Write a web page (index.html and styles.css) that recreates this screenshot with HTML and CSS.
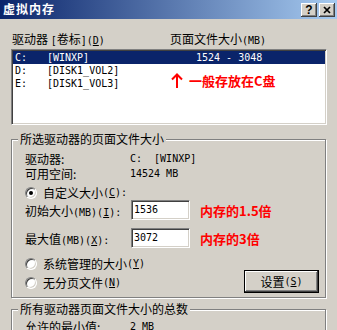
FILE: index.html
```html
<!DOCTYPE html>
<html lang="zh-CN">
<head>
  <meta charset="UTF-8">
  <title>虚拟内存</title>
  <link rel="stylesheet" href="styles.css">
</head>
<body>
  <div class="window">
    <!-- Title bar -->
    <div class="titlebar">
      <span class="title">虚拟内存</span>
      <div class="caption-btns">
        <span class="cbtn help">?</span>
        <span class="cbtn">
          <svg width="8" height="8" viewBox="0 0 8 8"><path d="M1 1L7 7M7 1L1 7" stroke="#000" stroke-width="1.7"/></svg>
        </span>
      </div>
    </div>

    <div class="content">
      <!-- Drive list -->
      <div class="list-head">
        <span>驱动器 <span class="en">[</span>卷标<span class="en">](<u>D</u>)</span></span>
        <span>页面文件大小<span class="en">(MB)</span></span>
      </div>
      <div class="listbox">
        <div class="row sel"><span>C:</span><span>[WINXP]</span><span>1524 - 3048</span></div>
        <div class="row"><span>D:</span><span>[DISK1_VOL2]</span><span></span></div>
        <div class="row"><span>E:</span><span>[DISK1_VOL3]</span><span></span></div>
        <div class="note">
          <svg width="12" height="15" viewBox="0 0 12 15"><path d="M6 1.5V15M1 6.5L6 1.5L11 6.5" fill="none" stroke="#f00" stroke-width="2"/></svg>
          <span>一般存放在C盘</span>
        </div>
      </div>

      <!-- Selected drive -->
      <fieldset class="group">
        <legend>所选驱动器的页面文件大小</legend>
        <div class="group-body">
          <div class="info"><span>驱动器:</span><span class="en">C:  [WINXP]</span></div>
          <div class="info"><span>可用空间:</span><span class="en">14524 MB</span></div>
          <div class="option first"><span class="radio checked"></span>自定义大小<span class="en">(<u>C</u>):</span></div>
          <div class="field">
            <span>初始大小<span class="en">(MB)(<u>I</u>):</span></span>
            <span class="input en">1536</span>
            <span class="red">内存的1.5倍</span>
          </div>
          <div class="field second">
            <span>最大值<span class="en">(MB)(<u>X</u>):</span></span>
            <span class="input en">3072</span>
            <span class="red">内存的3倍</span>
          </div>
          <div class="bottom">
            <div class="options">
              <div class="option"><span class="radio"></span>系统管理的大小<span class="en">(<u>Y</u>)</span></div>
              <div class="option"><span class="radio"></span>无分页文件<span class="en">(<u>N</u>)</span></div>
            </div>
            <span class="button">设置<span class="en">(<u>S</u>)</span></span>
          </div>
        </div>
      </fieldset>

      <!-- Totals -->
      <fieldset class="group total">
        <legend>所有驱动器页面文件大小的总数</legend>
        <div class="group-body">
          <div class="info"><span>允许的最小值:</span><span class="en">2 MB</span></div>
        </div>
      </fieldset>
    </div>
  </div>
</body>
</html>
```

FILE: styles.css
```css
body {
  margin: 0;
  background: #d4d0c8;
  font-family: "Noto Sans CJK SC", sans-serif;
  font-size: 12px;
  color: #000;
}
.window {
  width: 337px;
  height: 330px;
  overflow: hidden;
  background: #d4d0c8;
}
.en {
  font-family: "DejaVu Sans Mono", monospace;
  font-size: 10px;
  white-space: pre;
}

/* title bar */
.titlebar {
  height: 19px;
  display: flex;
  justify-content: space-between;
  align-items: flex-start;
  padding: 0 2px 0 3px;
  background: linear-gradient(to right, #0a246a, #a6caf0);
}
.title {
  color: #fff;
  font-weight: bold;
  letter-spacing: 1px;
  line-height: 14px;
  margin-top: 2px;
}
.caption-btns {
  display: flex;
  gap: 2px;
  margin-top: 3px;
}
.cbtn {
  width: 16px;
  height: 14px;
  box-sizing: border-box;
  display: flex;
  align-items: center;
  justify-content: center;
  background: #d4d0c8;
  box-shadow: inset -1px -1px #404040, inset 1px 1px #fff, inset -2px -2px #808080;
}
.cbtn.help {
  font-family: "Liberation Sans", sans-serif;
  font-weight: bold;
  font-size: 12px;
  line-height: 14px;
}

.content {
  padding: 0 10px 0 11px;
}

/* drive list */
.list-head {
  display: grid;
  grid-template-columns: 158px 1fr;
  padding: 13px 0 0 1px;
  line-height: 14px;
  margin-bottom: 1px;
}
.listbox {
  position: relative;
  height: 76px;
  box-sizing: border-box;
  background: #fff;
  border: 1px solid;
  border-color: #808080 #fff #fff #808080;
  box-shadow: inset 1px 1px #404040, inset -1px -1px #d4d0c8;
  padding: 1px;
}
.row {
  display: grid;
  grid-template-columns: 32px 149px 1fr;
  height: 13px;
  line-height: 13px;
  padding-left: 2px;
  font-family: "DejaVu Sans Mono", monospace;
  font-size: 10px;
  white-space: pre;
}
.row.sel {
  background: #0a246a;
  color: #fff;
}
.note {
  position: absolute;
  left: 159px;
  top: 23px;
  display: flex;
  align-items: center;
  gap: 6px;
  color: #f00;
  font-weight: bold;
  font-size: 13px;
  line-height: 15px;
}

/* group boxes */
.group {
  margin: 7px 1px 0 0;
  padding: 0;
  border: 1px solid #808080;
  box-shadow: inset 1px 1px #fff, 1px 1px #fff;
  min-width: 0;
}
.group legend {
  margin-left: 6px;
  padding: 0 2px;
  line-height: 14px;
  background: #d4d0c8;
}
.group-body {
  padding: 5px 6px 4px 13px;
}
.info {
  display: grid;
  grid-template-columns: 105px 1fr;
  height: 15px;
  line-height: 15px;
}
.option {
  display: flex;
  align-items: center;
  height: 15px;
  line-height: 15px;
}
.option.first {
  margin-top: 4px;
}
.radio {
  position: relative;
  width: 12px;
  height: 12px;
  box-sizing: border-box;
  margin-right: 6px;
  border-radius: 50%;
  background: #fff;
  border: 1px solid;
  border-color: #808080 #fff #fff #808080;
  box-shadow: inset 1px 1px #404040, inset -1px -1px #d4d0c8;
}
.radio.checked::after {
  content: "";
  position: absolute;
  left: 3px;
  top: 3px;
  width: 4px;
  height: 4px;
  border-radius: 50%;
  background: #000;
}
.field {
  display: grid;
  grid-template-columns: 106px 59px 1fr;
  align-items: center;
  height: 20px;
}
.field.second {
  margin-top: 8px;
}
.input {
  height: 20px;
  box-sizing: border-box;
  background: #fff;
  border: 1px solid;
  border-color: #808080 #fff #fff #808080;
  box-shadow: inset 1px 1px #404040, inset -1px -1px #d4d0c8;
  padding: 2px 0 0 2px;
  line-height: 14px;
}
.red {
  color: #f00;
  font-weight: bold;
  font-size: 13px;
  margin-left: 10px;
}
.bottom {
  display: flex;
  justify-content: space-between;
  height: 37px;
  margin-top: 8px;
}
.options {
  display: flex;
  flex-direction: column;
  gap: 4px;
}
.button {
  align-self: flex-end;
  width: 75px;
  height: 23px;
  box-sizing: border-box;
  display: flex;
  align-items: center;
  justify-content: center;
  border: 1px solid #000;
  box-shadow: inset -1px -1px #404040, inset 1px 1px #fff, inset -2px -2px #808080;
}
.group.total {
  margin-top: 4px;
}
.group.total .group-body {
  padding-top: 3px;
}
```
